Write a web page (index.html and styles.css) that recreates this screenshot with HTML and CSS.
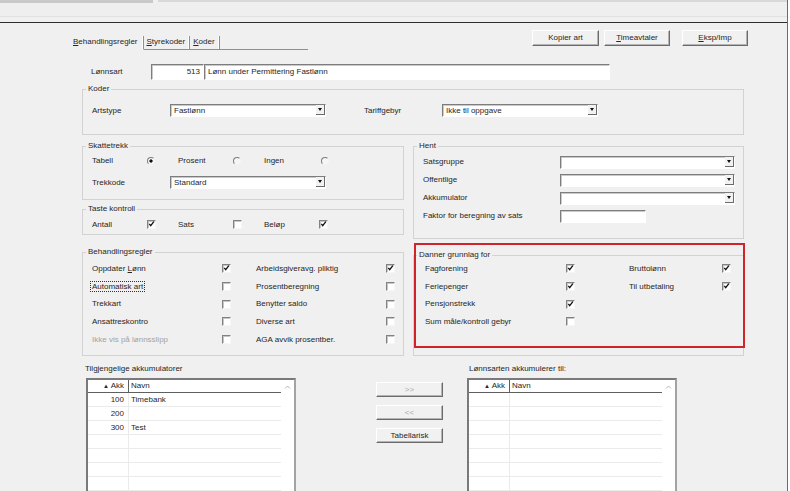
FILE: index.html
```html
<!DOCTYPE html>
<html>
<head lang="no">
    <meta charset="UTF-8">
    <title>Lønnsart</title>
    <link rel="stylesheet" href="styles.css">
</head>
<body>
<div id="window">
    <div class="strip"><span class="strip-left"></span><span class="strip-right"></span></div>
    <div class="toolbar"></div>
    <div class="toolbar-bottom"></div>

    <div id="main">
        <div class="head-row">
            <div class="tabs">
                <span class="tab active"><u>B</u>ehandlingsregler</span>
                <span class="tab"><u>S</u>tyrekoder</span>
                <span class="tab"><u>K</u>oder</span>
                <span class="tab-fill"></span>
            </div>
            <div class="btn-bar">
                <span class="btn">Kopier art</span>
                <span class="btn"><u>T</u>imeavtaler</span>
                <span class="btn last"><u>E</u>ksp/Imp</span>
            </div>
        </div>

        <div class="lonnsart">
            <span class="lbl-lonnsart">Lønnsart</span>
            <span class="input num">513</span>
            <span class="input name">Lønn under Permittering Fastlønn</span>
        </div>

        <fieldset class="koder">
            <legend>Koder</legend>
            <div class="row koder-row">
                <span class="lbl">Artstype</span>
                <span class="select"><span class="val">Fastlønn</span><span class="arrow"></span></span>
                <span class="lbl tariff">Tariffgebyr</span>
                <span class="select"><span class="val">Ikke til oppgave</span><span class="arrow"></span></span>
            </div>
        </fieldset>

        <div class="cols">
            <div class="col-left">
                <fieldset class="skatt">
                    <legend>Skattetrekk</legend>
                    <div class="opts skatt-opts">
                        <span class="opt"><span class="t">Tabell</span><span class="radio on"></span></span>
                        <span class="opt"><span class="t">Prosent</span><span class="radio"></span></span>
                        <span class="opt"><span class="t wide">Ingen</span><span class="radio"></span></span>
                    </div>
                    <div class="row trekk-row">
                        <span class="lbl">Trekkode</span>
                        <span class="select"><span class="val">Standard</span><span class="arrow"></span></span>
                    </div>
                </fieldset>

                <fieldset class="taste">
                    <legend>Taste kontroll</legend>
                    <div class="opts taste-opts">
                        <span class="opt"><span class="t">Antall</span><span class="cb"><svg viewBox="0 0 8 8"><path d="M1.5 3.2l1.6 2.2 3.6-4.6"/></svg></span></span>
                        <span class="opt"><span class="t">Sats</span><span class="cb"></span></span>
                        <span class="opt"><span class="t">Beløp</span><span class="cb"><svg viewBox="0 0 8 8"><path d="M1.5 3.2l1.6 2.2 3.6-4.6"/></svg></span></span>
                    </div>
                </fieldset>

                <fieldset class="regler">
                    <legend>Behandlingsregler</legend>
                    <div class="check-grid regler-grid">
                        <span>Oppdater <u>L</u>ønn</span>
                        <span class="cb"><svg viewBox="0 0 8 8"><path d="M1.5 3.2l1.6 2.2 3.6-4.6"/></svg></span>
                        <span>Arbeidsgiveravg. pliktig</span>
                        <span class="cb"><svg viewBox="0 0 8 8"><path d="M1.5 3.2l1.6 2.2 3.6-4.6"/></svg></span>

                        <span><span class="focus">Automatisk art</span></span>
                        <span class="cb"></span>
                        <span>Prosentberegning</span>
                        <span class="cb"></span>

                        <span>Trekkart</span>
                        <span class="cb"></span>
                        <span>Benytter saldo</span>
                        <span class="cb"></span>

                        <span>Ansattreskontro</span>
                        <span class="cb"></span>
                        <span>Diverse art</span>
                        <span class="cb"></span>

                        <span class="disabled">Ikke vis på lønnsslipp</span>
                        <span class="cb"></span>
                        <span>AGA avvik prosentber.</span>
                        <span class="cb"></span>
                    </div>
                </fieldset>
            </div>

            <div class="col-right">
                <fieldset class="hent">
                    <legend>Hent</legend>
                    <div class="hent-row">
                        <span class="lbl">Satsgruppe</span>
                        <span class="select"><span class="val"></span><span class="arrow"></span></span>
                    </div>
                    <div class="hent-row">
                        <span class="lbl">Offentlige</span>
                        <span class="select"><span class="val"></span><span class="arrow"></span></span>
                    </div>
                    <div class="hent-row">
                        <span class="lbl">Akkumulator</span>
                        <span class="select"><span class="val"></span><span class="arrow"></span></span>
                    </div>
                    <div class="hent-row">
                        <span class="lbl">Faktor for beregning av sats</span>
                        <span class="input faktor"></span>
                    </div>
                </fieldset>

                <div class="danner-wrap">
                    <fieldset class="danner">
                        <legend>Danner grunnlag for</legend>
                        <div class="check-grid danner-grid">
                            <span>Fagforening</span>
                            <span class="cb"><svg viewBox="0 0 8 8"><path d="M1.5 3.2l1.6 2.2 3.6-4.6"/></svg></span>
                            <span>Bruttolønn</span>
                            <span class="cb"><svg viewBox="0 0 8 8"><path d="M1.5 3.2l1.6 2.2 3.6-4.6"/></svg></span>

                            <span>Feriepenger</span>
                            <span class="cb"><svg viewBox="0 0 8 8"><path d="M1.5 3.2l1.6 2.2 3.6-4.6"/></svg></span>
                            <span>Til utbetaling</span>
                            <span class="cb"><svg viewBox="0 0 8 8"><path d="M1.5 3.2l1.6 2.2 3.6-4.6"/></svg></span>

                            <span>Pensjonstrekk</span>
                            <span class="cb"><svg viewBox="0 0 8 8"><path d="M1.5 3.2l1.6 2.2 3.6-4.6"/></svg></span>
                            <span></span>
                            <span></span>

                            <span>Sum måle/kontroll gebyr</span>
                            <span class="cb"></span>
                        </div>
                    </fieldset>
                    <div class="mark"></div>
                </div>
            </div>
        </div>

        <div class="bottom">
            <div class="list-panel">
                <div class="list-title">Tilgjengelige akkumulatorer</div>
                <div class="grid">
                    <div class="table">
                        <div class="gh"><span class="c1"><span class="sort">▲</span> Akk</span><span class="c2">Navn</span></div>
                        <div class="gr"><span class="c1">100</span><span class="c2">Timebank</span></div>
                        <div class="gr"><span class="c1">200</span><span class="c2"></span></div>
                        <div class="gr"><span class="c1">300</span><span class="c2">Test</span></div>
                        <div class="gr"><span class="c1"></span><span class="c2"></span></div>
                        <div class="gr"><span class="c1"></span><span class="c2"></span></div>
                        <div class="gr"><span class="c1"></span><span class="c2"></span></div>
                        <div class="gr"><span class="c1"></span><span class="c2"></span></div>
                        <div class="gr"><span class="c1"></span><span class="c2"></span></div>
                    </div>
                    <div class="vscroll"><svg viewBox="0 0 7 4"><path d="M1 3.5l2.5-2.5 2.5 2.5"/></svg></div>
                </div>
            </div>

            <div class="mid-btns">
                <span class="btn off">&gt;&gt;</span>
                <span class="btn off">&lt;&lt;</span>
                <span class="btn">Tabellarisk</span>
            </div>

            <div class="list-panel right">
                <div class="list-title">Lønnsarten akkumulerer til:</div>
                <div class="grid">
                    <div class="table">
                        <div class="gh"><span class="c1"><span class="sort">▲</span> Akk</span><span class="c2">Navn</span></div>
                        <div class="gr"><span class="c1"></span><span class="c2"></span></div>
                        <div class="gr"><span class="c1"></span><span class="c2"></span></div>
                        <div class="gr"><span class="c1"></span><span class="c2"></span></div>
                        <div class="gr"><span class="c1"></span><span class="c2"></span></div>
                        <div class="gr"><span class="c1"></span><span class="c2"></span></div>
                        <div class="gr"><span class="c1"></span><span class="c2"></span></div>
                        <div class="gr"><span class="c1"></span><span class="c2"></span></div>
                        <div class="gr"><span class="c1"></span><span class="c2"></span></div>
                    </div>
                    <div class="vscroll"><svg viewBox="0 0 7 4"><path d="M1 3.5l2.5-2.5 2.5 2.5"/></svg></div>
                </div>
            </div>
        </div>
    </div>
</div>
</body>
</html>
```

FILE: styles.css
```css
*{
    margin: 0;
    padding: 0;
    box-sizing: border-box;
}
body {
    width: 790px;
    height: 491px;
    overflow: hidden;
    background: #fff;
    font: 8px/10px "Liberation Sans", Arial, sans-serif;
    color: #262626;
}
u {
    text-decoration: underline;
}
#window {
    width: 788px;
    height: 491px;
    background: #f0f0f0;
    border-right: 1px solid #5b6f80;
}
.strip {
    display: flex;
    height: 3px;
}
.strip-left {
    width: 153px;
    background: #c9c9c9;
}
.strip-right {
    flex: 1;
    height: 2px;
    margin-left: 5px;
    background: #d9d9d9;
}
.toolbar {
    height: 14px;
    background: #efefef;
    border-bottom: 1px solid #e1e1e1;
}
.toolbar-bottom {
    height: 6px;
    border-bottom: 1px solid #2e2e2e;
}
#main {
    padding: 7px 0 0 82px;
}

/* tabs + buttons */
.head-row {
    display: flex;
    height: 20px;
    margin-left: -9px;
}
.tabs {
    display: flex;
    width: 235px;
    height: 14px;
    margin-top: 6px;
}
.tab {
    padding: 1px 4px 0 3px;
    border-right: 1px solid #8f8f8f;
    border-bottom: 1px solid #8f8f8f;
    box-shadow: inset -1px 0 0 #fff;
}
.tab.active {
    padding-left: 0;
    padding-right: 5px;
    border-bottom-color: transparent;
}
.tab-fill {
    flex: 1;
    border-bottom: 1px solid #8f8f8f;
}
.btn-bar {
    display: flex;
    gap: 5px;
    margin-left: 224px;
}
.btn {
    display: block;
    width: 67px;
    height: 16px;
    line-height: 14px;
    text-align: center;
    background: #f1f1f1;
    border: 1px solid;
    border-color: #fff #6b6b6b #6b6b6b #fff;
    box-shadow: inset -1px -1px 0 #b4b4b4;
}
.btn-bar .btn + .btn {
    width: 66px;
}
.btn-bar .btn.last {
    margin-left: 7px;
}
.btn.off {
    color: #a8a8a8;
}

/* inputs */
.input, .select {
    display: block;
    height: 13px;
    line-height: 11px;
    background: #fff;
    border: 1px solid;
    border-color: #7d7d7d #fff #fff #7d7d7d;
    box-shadow: inset 1px 1px 0 #c9c9c9;
}
.lonnsart {
    display: flex;
    align-items: center;
    height: 16px;
    margin-top: 14px;
    padding-left: 9px;
}
.lbl-lonnsart {
    width: 60px;
}
.lonnsart .input {
    height: 16px;
    line-height: 14px;
}
.input.num {
    width: 53px;
    padding-right: 3px;
    text-align: right;
}
.input.name {
    width: 406px;
    padding-left: 3px;
}
.input.faktor {
    width: 86px;
}
.select {
    display: flex;
    width: 156px;
}
.select .val {
    flex: 1;
    padding-left: 3px;
}
.select .arrow {
    display: flex;
    align-items: center;
    justify-content: center;
    width: 9px;
    margin: 0 0 1px;
    background: #f2f2f2;
    border-right: 1px solid #6b6b6b;
    border-bottom: 1px solid #6b6b6b;
}
.select .arrow:after {
    content: "";
    border-left: 2.5px solid transparent;
    border-right: 2.5px solid transparent;
    border-top: 3px solid #111;
}

/* group boxes */
fieldset {
    min-width: 0;
    border: 1px solid #d2d2d2;
}
legend {
    margin-left: 3px;
    padding: 0 2px;
    line-height: 10px;
}
.row {
    display: flex;
    align-items: center;
    height: 13px;
    padding-left: 9px;
}
.lbl {
    width: 78px;
}
.koder {
    width: 662px;
    height: 51px;
    margin-top: 4px;
}
.koder-row {
    margin-top: 10px;
}
.lbl.tariff {
    margin-left: 38px;
}
.cols {
    display: flex;
    gap: 9px;
    margin-top: 6px;
}
.col-left {
    width: 322px;
}
.col-right {
    width: 331px;
}
.skatt {
    height: 59px;
}
.opts {
    display: flex;
    align-items: center;
    height: 13px;
    padding-left: 9px;
}
.opt {
    display: flex;
    align-items: center;
    width: 86px;
}
.opt .t {
    width: 55px;
}
.opt .t.wide {
    width: 57px;
}
.skatt-opts {
    margin-top: 3px;
}
.trekk-row {
    margin-top: 9px;
}
.taste {
    height: 31px;
    margin-top: 4px;
}
.taste-opts {
    margin-top: 4px;
}
.regler {
    height: 109px;
    margin-top: 12px;
}
.check-grid {
    display: grid;
    grid-auto-rows: 17.7px;
    align-items: center;
}
.regler-grid {
    grid-template-columns: 130px 34px 130px 10px;
    padding: 3px 0 0 9px;
}
.focus {
    outline: 1px dotted #333;
    outline-offset: 0;
    padding: 0 1px;
    margin-left: -1px;
}
.disabled {
    color: #a3a3a3;
}

/* checkbox and radio */
.cb {
    display: block;
    width: 9px;
    height: 9px;
    background: #fff;
    border: 1px solid;
    border-color: #828282 #f6f6f6 #f6f6f6 #828282;
    box-shadow: inset 1px 1px 0 #c6c6c6;
}
.cb svg {
    display: block;
    width: 7px;
    height: 7px;
    fill: none;
    stroke: #111;
    stroke-width: 1.5;
}
.radio {
    display: block;
    width: 8px;
    height: 8px;
    border-radius: 50%;
    border: 1px solid;
    border-color: #7d7d7d #f4f4f4 #f4f4f4 #7d7d7d;
    background: #f6f6f6;
}
.radio.on {
    background: radial-gradient(circle, #111 0 1.4px, #f6f6f6 1.8px);
}

/* right column */
.hent {
    height: 98px;
}
.hent-row {
    display: flex;
    align-items: center;
    height: 18px;
    padding-left: 9px;
}
.hent-row:first-of-type {
    margin-top: 2px;
}
.hent-row .lbl {
    width: 137px;
}
.hent .select {
    width: 175px;
}
.danner-wrap {
    position: relative;
    margin-top: 11px;
}
.danner {
    height: 106px;
}
.danner-grid {
    grid-template-columns: 141px 63px 93px 10px;
    padding-left: 11px;
}
.mark {
    position: absolute;
    top: -7px;
    left: 1px;
    width: 331px;
    height: 105px;
    border: 2px solid #cf242b;
}

/* accumulator lists */
.bottom {
    display: flex;
    margin: 8px 0 0 4px;
}
.list-panel {
    width: 210px;
}
.list-panel.right {
    margin-left: 24px;
}
.list-title {
    height: 10px;
    margin-left: -1px;
}
.list-panel.right .list-title {
    padding-left: 3px;
}
.grid {
    display: flex;
    height: 120px;
    margin-top: 4px;
    background: #fff;
    border: 2px solid;
    border-color: #7a7a7a #a3a3a3 #a3a3a3 #7a7a7a;
}
.table {
    flex: 1;
}
.gh, .gr {
    display: flex;
    height: 14px;
    line-height: 13px;
    border-bottom: 1px solid #ebebeb;
}
.gh {
    height: 13px;
    line-height: 12px;
    border-bottom-color: #5f5f5f;
}
.c1 {
    width: 41px;
    padding-right: 4px;
    text-align: right;
    border-right: 1px solid #ebebeb;
}
.gh .c1 {
    border-right-color: #5f5f5f;
}
.c2 {
    padding-left: 2px;
}
.sort {
    font-size: 6px;
    vertical-align: 0;
}
.vscroll {
    width: 13px;
}
.vscroll svg {
    display: block;
    width: 7px;
    height: 4px;
    margin: 5px 0 0 3px;
    fill: none;
    stroke: #b4b4b4;
    stroke-width: 1;
}
.mid-btns {
    display: flex;
    flex-direction: column;
    gap: 8px;
    margin: 18px 0 0 80px;
}
.mid-btns .btn {
    height: 15px;
    line-height: 13px;
}
```
